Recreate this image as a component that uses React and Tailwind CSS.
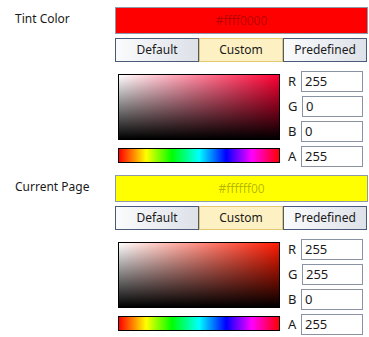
import React from "react";

const font = { fontFamily: '"Noto Sans", "Open Sans", sans-serif' };

const ColorChannel = ({ label, value, shift }) => (
  <div className="flex items-center h-[21px]">
    <span className="w-[13px] text-[13px] text-[#1a1a1a] leading-none">{label}</span>
    <div
      className={`h-[21px] border border-[#8a93a3] bg-white flex items-center pl-[3px] text-[13px] text-[#1a1a1a] ${
        shift ? "ml-px w-[61px]" : "w-[62px]"
      }`}
    >
      {value}
    </div>
  </div>
);

const ColorEditor = ({ label, hex, swatch, hue, channels }) => (
  <div className="flex">
    <div className="w-[115px] pl-[15px] pt-[3px] text-[12px] text-[#1a1a1a]">{label}</div>
    <div className="w-[253px] flex flex-col">
      <div
        className="h-[27px] border border-[#8e99ab] flex items-center justify-center text-[12px] text-black/30"
        style={{ backgroundColor: swatch }}
      >
        {hex}
      </div>
      <div className="flex mt-[4px] h-[24px] text-[12px] text-[#1a1a1a]">
        <div className="w-[84px] border border-[#4b5a78] bg-gradient-to-r from-[#fafbfc] to-[#dde1e8] flex items-center justify-center">
          Default
        </div>
        <div className="w-[84px] border border-[#e4c66e] bg-[#fdf1c3] flex items-center justify-center">
          Custom
        </div>
        <div className="w-[84px] border border-[#4b5a78] bg-gradient-to-r from-[#fafbfc] to-[#dde1e8] flex items-center justify-center">
          Predefined
        </div>
      </div>
      <div className="flex mt-[9px]">
        <div className="flex flex-col pl-[3px] pt-[3px]">
          <div
            className="w-[162px] h-[66px] border border-black"
            style={{
              background: `linear-gradient(to bottom, rgba(0,0,0,0), #000), linear-gradient(to right, #fff, ${hue})`,
            }}
          />
          <div
            className="w-[162px] h-[15px] mt-[8px] border border-black"
            style={{
              background:
                "linear-gradient(to right, #ff0000, #ffff00 17%, #00ff00 33%, #00ffff 50%, #0000ff 67%, #ff00ff 83%, #ff0000)",
            }}
          />
        </div>
        <div className="flex flex-col gap-[4px] ml-[8px]">
          {channels.map((c) => (
            <ColorChannel key={c.label} {...c} />
          ))}
        </div>
      </div>
    </div>
  </div>
);

export default function App() {
  return (
    <div className="w-[369px] h-[337px] bg-white overflow-hidden pt-[7px] flex flex-col gap-[8px]" style={font}>
      <ColorEditor
        label="Tint Color"
        hex="#ffff0000"
        swatch="#ff0000"
        hue="#ff0033"
        channels={[
          { label: "R", value: "255" },
          { label: "G", value: "0", shift: true },
          { label: "B", value: "0" },
          { label: "A", value: "255" },
        ]}
      />
      <ColorEditor
        label="Current Page"
        hex="#ffffff00"
        swatch="#ffff00"
        hue="#ff1a00"
        channels={[
          { label: "R", value: "255" },
          { label: "G", value: "255", shift: true },
          { label: "B", value: "0" },
          { label: "A", value: "255" },
        ]}
      />
    </div>
  );
}
